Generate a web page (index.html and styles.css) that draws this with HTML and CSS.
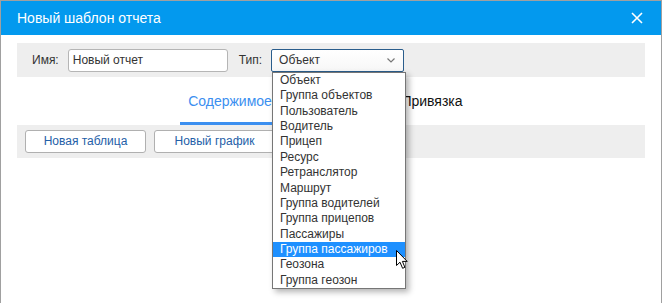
FILE: index.html
```html
<!DOCTYPE html>
<html lang="ru">
<head>
<meta charset="utf-8">
<link rel="stylesheet" href="styles.css">
</head>
<body>
<div class="dialog">
  <div class="header">
    <span class="title">Новый шаблон отчета</span>
    <svg class="close" width="12" height="12" viewBox="0 0 12 12"><path d="M1 1L11 11M11 1L1 11" stroke="#fff" stroke-width="1.6" fill="none"/></svg>
  </div>
  <div class="content">
    <div class="toolbar top">
      <label class="lbl">Имя:</label>
      <div class="input">Новый отчет</div>
      <label class="lbl lbl-type">Тип:</label>
      <div class="select">
        <span>Объект</span>
        <svg class="chev" width="8" height="5" viewBox="0 0 8 5"><path d="M0.5 0.5L4 4L7.5 0.5" stroke="#777" stroke-width="1.2" fill="none"/></svg>
      </div>
    </div>
    <div class="tabs">
      <div class="tab active">Содержимое</div>
      <div class="tab"></div>
      <div class="tab">Привязка</div>
    </div>
    <div class="toolbar bottom">
      <div class="btn">Новая таблица</div>
      <div class="btn">Новый график</div>
    </div>
  </div>
  <ul class="dropdown">
    <li>Объект</li>
    <li>Группа объектов</li>
    <li>Пользователь</li>
    <li>Водитель</li>
    <li>Прицеп</li>
    <li>Ресурс</li>
    <li>Ретранслятор</li>
    <li>Маршрут</li>
    <li>Группа водителей</li>
    <li>Группа прицепов</li>
    <li>Пассажиры</li>
    <li class="hl">Группа пассажиров</li>
    <li>Геозона</li>
    <li>Группа геозон</li>
  </ul>
  <svg class="cursor" width="13" height="20" viewBox="0 0 13 20"><path d="M0.5 0.5L0.5 15.5L4 12.2L6.6 18.3L8.9 17.3L6.4 11.4L11.2 11.4Z" fill="#fff" stroke="#000" stroke-width="1" stroke-linejoin="round"/></svg>
</div>
</body>
</html>
```

FILE: styles.css
```css
html, body {
  margin: 0;
  padding: 0;
  background: #fff;
}
body {
  font-family: "Liberation Sans", Arial, sans-serif;
  width: 662px;
  height: 303px;
  overflow: hidden;
}
.dialog {
  position: relative;
  box-sizing: border-box;
  width: 662px;
  height: 304px;
  border: 1px solid #a0a0a0;
  border-bottom: none;
  background: #fff;
}
.header {
  height: 34px;
  background: #0399ee;
  display: flex;
  align-items: center;
  justify-content: space-between;
  padding: 0 18px 0 16px;
}
.title {
  color: #fff;
  font-size: 14px;
}
.close {
  display: block;
}
.content {
  padding: 8px 16px 0 16px;
}
.toolbar {
  background: #eeeeee;
  display: flex;
  align-items: center;
}
.toolbar.top {
  height: 34px;
  padding-left: 15px;
}
.lbl {
  font-size: 12px;
  color: #333;
  margin-right: 9px;
}
.lbl-type {
  margin-left: 11px;
}
.input {
  box-sizing: border-box;
  width: 160px;
  height: 23px;
  border: 1px solid #b5b5b5;
  border-radius: 3px;
  background: #fff;
  font-size: 12px;
  color: #333;
  line-height: 21px;
  padding-left: 4px;
}
.select {
  box-sizing: border-box;
  width: 133px;
  height: 23px;
  border: 1px solid #2a5d8c;
  border-radius: 2px;
  background: linear-gradient(#fff, #f7f7f7);
  font-size: 12px;
  color: #333;
  display: flex;
  align-items: center;
  justify-content: space-between;
  padding: 0 8px 0 7px;
}
.chev {
  display: block;
}
.tabs {
  height: 48px;
  display: flex;
  justify-content: center;
}
.tab {
  box-sizing: border-box;
  width: 101px;
  text-align: center;
  font-size: 14px;
  color: #111;
  padding-top: 16px;
  white-space: nowrap;
}
.tab.active {
  color: #3b8ff0;
  border-bottom: 3px solid #3b8ff0;
}
.toolbar.bottom {
  height: 33px;
  padding-left: 8px;
  gap: 8px;
}
.btn {
  box-sizing: border-box;
  width: 121px;
  height: 23px;
  border: 1px solid #b0b0b0;
  border-radius: 3px;
  background: #fff;
  font-size: 12px;
  color: #2460a7;
  text-align: center;
  line-height: 21px;
}
.dropdown {
  position: absolute;
  left: 271px;
  top: 71px;
  width: 134px;
  height: 217px;
  box-sizing: border-box;
  margin: 0;
  padding: 0;
  list-style: none;
  background: #fff;
  border: 1px solid #767676;
  box-shadow: 3px 3px 6px rgba(0,0,0,0.3);
  font-size: 12px;
  color: #333;
}
.dropdown li {
  height: 15.36px;
  line-height: 15px;
  padding-left: 7px;
  white-space: nowrap;
}
.dropdown li.hl {
  background: #1e90ff;
  color: #fff;
}
.cursor {
  position: absolute;
  left: 395px;
  top: 249px;
}
```
